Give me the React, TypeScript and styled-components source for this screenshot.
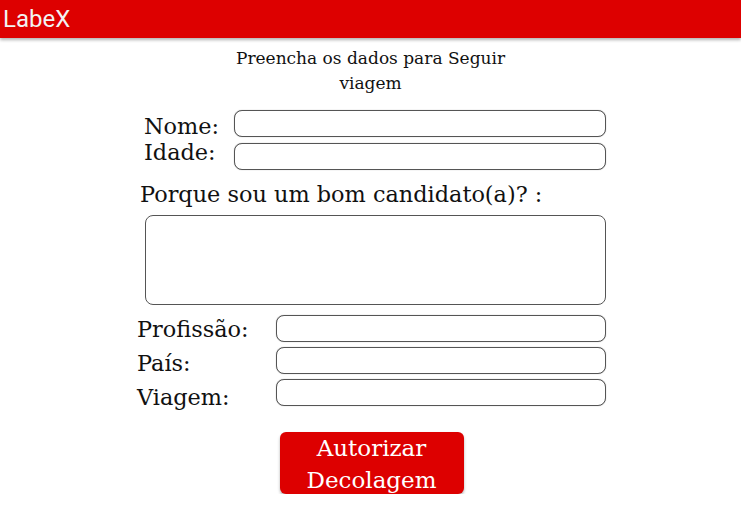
import React from "react";
import styled, { createGlobalStyle } from "styled-components";

const Global = createGlobalStyle`
  html, body { margin: 0; padding: 0; background: #ffffff; }
  body { font-family: "DejaVu Serif", serif; color: #111; }
  * { box-sizing: border-box; }
`;

const Header = styled.header`
  height: 38px;
  background: #dd0000;
  box-shadow: 0 2px 3px rgba(0, 0, 0, 0.3);
  display: flex;
  align-items: center;
  padding-left: 3px;
`;

const Logo = styled.h1`
  margin: 0;
  font-family: Roboto, "Liberation Sans", sans-serif;
  font-weight: 400;
  font-size: 24px;
  color: #f2f2f2;
`;

const Main = styled.main`
  display: flex;
  flex-direction: column;
  align-items: center;
`;

const Title = styled.p`
  margin: 8px 0 0;
  width: 300px;
  text-align: center;
  font-size: 17px;
  line-height: 25px;
`;

const Form = styled.form`
  width: 469px;
  display: flex;
  flex-direction: column;
  margin: 14px 0 0 2px;
`;

const Group = styled.div<{ $indent: number; $labelWidth: number; $top?: number }>`
  display: grid;
  grid-template-columns: ${(p) => p.$labelWidth}px 1fr;
  align-items: start;
  padding-left: ${(p) => p.$indent}px;
  margin-top: ${(p) => p.$top ?? 0}px;
`;

const LabelColumn = styled.div<{ $lineHeight: number; $offset: number }>`
  display: flex;
  flex-direction: column;
  margin-top: ${(p) => p.$offset}px;
  font-size: 22.4px;
  line-height: ${(p) => p.$lineHeight}px;
`;

const InputColumn = styled.div<{ $gap: number }>`
  display: flex;
  flex-direction: column;
  gap: ${(p) => p.$gap}px;
`;

const Label = styled.label``;

const Input = styled.input`
  height: 27px;
  border: 1px solid #555;
  border-radius: 8px;
  box-shadow: 0 0 1px rgba(0, 0, 0, 0.4);
  background: #fff;
  outline: none;
`;

const Question = styled.label`
  font-size: 22.4px;
  line-height: 28px;
  margin: 10px 0 0 3px;
`;

const TextArea = styled.textarea`
  margin: 7px 0 0 8px;
  height: 90px;
  border: 1px solid #555;
  border-radius: 8px;
  resize: none;
  background: #fff;
  outline: none;
`;

const Button = styled.button`
  align-self: center;
  margin-top: 18px;
  width: 184px;
  height: 62px;
  border: none;
  border-radius: 6px;
  background: #dd0000;
  color: #fff;
  font-family: "DejaVu Serif", serif;
  font-size: 23px;
  line-height: 32px;
  box-shadow: 0 2px 3px rgba(0, 0, 0, 0.3);
  padding: 0;
`;

export default function App() {
  return (
    <>
      <Global />
      <Header>
        <Logo>LabeX</Logo>
      </Header>
      <Main>
        <Title>Preencha os dados para Seguir viagem</Title>
        <Form>
          <Group $indent={7} $labelWidth={90}>
            <LabelColumn $lineHeight={26} $offset={3}>
              <Label htmlFor="nome">Nome:</Label>
              <Label htmlFor="idade">Idade:</Label>
            </LabelColumn>
            <InputColumn $gap={6}>
              <Input id="nome" type="text" />
              <Input id="idade" type="text" />
            </InputColumn>
          </Group>
          <Question htmlFor="motivo">Porque sou um bom candidato(a)? :</Question>
          <TextArea id="motivo" />
          <Group $indent={0} $labelWidth={139} $top={10}>
            <LabelColumn $lineHeight={34} $offset={-3}>
              <Label htmlFor="profissao">Profissão:</Label>
              <Label htmlFor="pais">País:</Label>
              <Label htmlFor="viagem">Viagem:</Label>
            </LabelColumn>
            <InputColumn $gap={5}>
              <Input id="profissao" type="text" />
              <Input id="pais" type="text" />
              <Input id="viagem" type="text" />
            </InputColumn>
          </Group>
          <Button type="button">Autorizar Decolagem</Button>
        </Form>
      </Main>
    </>
  );
}
